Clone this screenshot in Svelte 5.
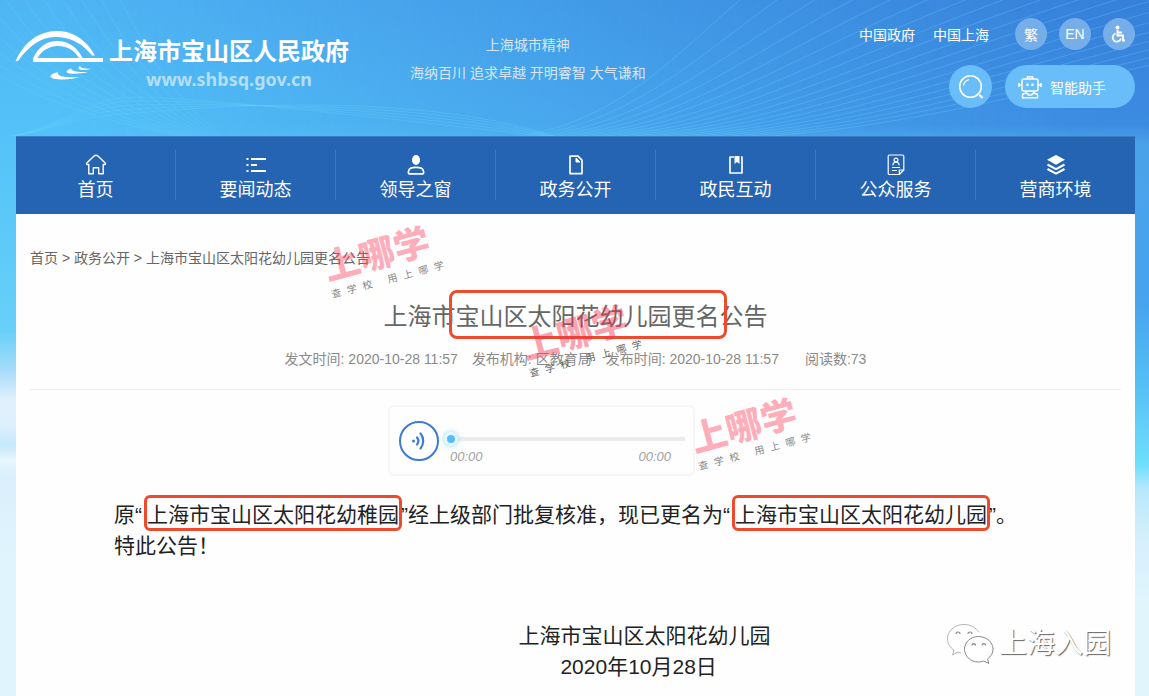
<script>
  const nav = [
    { label: '首页', icon: 'home' },
    { label: '要闻动态', icon: 'list' },
    { label: '领导之窗', icon: 'person' },
    { label: '政务公开', icon: 'file' },
    { label: '政民互动', icon: 'book' },
    { label: '公众服务', icon: 'card' },
    { label: '营商环境', icon: 'layers' }
  ];

  // Three families of fine curves behind the header
  const rightLines = Array.from({ length: 19 }, (_, i) =>
    `M${500 + i * 7} 138 C${610 + i * 14} ${130 + i} ${670 + i * 19} ${60 + i * 2} ${742 + i * 38} -2`
  );
  const leftLines = Array.from({ length: 12 }, (_, i) =>
    `M${-90 + i * 19} -2 C${-40 + i * 17} ${70 - i * 2} ${60 + i * 9} ${115 - i * 3} ${190 + i * 3} 138`
  );
  const lowLines = Array.from({ length: 5 }, (_, i) =>
    `M0 138 C50 132 80 ${116 - i * 3} 120 ${114 - i * 4} S400 ${84 + i * 9} 560 138`
  );

  const tagline = ['查', '学', '校', '', '用', '上', '哪', '学'];
  const stamps = ['one', 'two', 'three'];
  let position = $state(0);
</script>

<div class="page">
  <header>
    <svg class="waves" viewBox="0 0 1149 136" preserveAspectRatio="none" aria-hidden="true">
      {#each [...rightLines, ...leftLines, ...lowLines] as d}
        <path {d} />
      {/each}
    </svg>

    <a class="brand" href="#home">
      <svg class="emblem" viewBox="15 30 90 52" aria-hidden="true">
        <path d="M15.500 61.500C24 42 39 31 57 31c17 0 30 10 38 24.500h-3C83 44 71 37 55 37c-15 0-27 10-36.500 23.500z" />
        <path fill-rule="evenodd" d="M33 62v-3.500C38 47 47 41 57 41c12 0 21 7 25.500 17H103v4zM37.500 58H79c-5-8-12-12-21-12-8 0-16 4-20.500 12z" />
        <path d="M56 72.500c-8 2.500-7.500 6.500 4 7 8 .3 14-.8 20-2.500-9 .4-23 1-22-4.500zM71 68.500c-6 2-6 5 1 5.200 6 .2 11-.5 16-1.700-8 0-16 .2-17-3.500zM80 66c-3 1.500-1.500 4 3 4 3 0 6-.5 8-1.300-5 0-10 0-11-2.700z" />
      </svg>
      <span class="names">
        <strong>上海市宝山区人民政府</strong>
        <span class="url">www.shbsq.gov.cn</span>
      </span>
    </a>

    <p class="slogan">上海城市精神<br />海纳百川 追求卓越 开明睿智 大气谦和</p>

    <div class="tools">
      <div class="row">
        <a href="#china">中国政府</a>
        <a href="#shanghai">中国上海</a>
        <div class="rounds">
          <button class="round">繁</button>
          <button class="round">EN</button>
          <button class="round" aria-label="无障碍">
            <svg width="18" height="18" viewBox="0 0 18 18" aria-hidden="true">
              <circle cx="7.500" cy="2.500" r="2" fill="#fff" />
              <path d="M7.500 5v5.500h5.500v5h2M7.500 7.500h4.500" fill="none" stroke="#fff" stroke-width="2" />
              <path d="M5.500 8.500a4.200 4.200 0 1 0 5.500 5" fill="none" stroke="#fff" stroke-width="1.800" />
            </svg>
          </button>
        </div>
      </div>
      <div class="row big">
        <button class="search" aria-label="搜索">
          <svg width="26" height="26" viewBox="0 0 26 26" fill="none" stroke="#fff" aria-hidden="true">
            <circle cx="12.500" cy="12.500" r="10.800" stroke-width="1.500" />
            <path d="M5.500 11.500c.5-3 2.500-5 5.500-6" stroke-width="1.200" />
            <path d="M22 21.500l1.800 1.800" stroke-width="2.400" stroke-linecap="round" />
          </svg>
        </button>
        <button class="helper">
          <svg width="24" height="24" viewBox="0 0 24 24" fill="none" stroke="#fff" stroke-width="1.500" aria-hidden="true">
            <rect x="4" y="4" width="16" height="12" rx="2" />
            <path d="M9.500 4V1.800h5V4M1 8v4M23 8v4M1 10h3M20 10h3M8 16v2.500M16 16v2.500" />
            <path d="M9.500 8.500v2.500M14.500 8.500v2.500" stroke-width="2.200" />
            <path d="M4.500 22.800v-2.500c0-1.200.8-1.800 2-1.800h3l1 1.500h3l1-1.500h3c1.200 0 2 .6 2 1.800v2.500z" />
          </svg>
          智能助手
        </button>
      </div>
    </div>
  </header>

  <div class="sheet">
    <nav>
      {#each nav as item}
        <a href="#{item.icon}">
          <svg width="22" height="22" viewBox="0 0 22 22" fill="none" stroke="#fff" stroke-width="1.500" stroke-linejoin="round" aria-hidden="true">
            {#if item.icon === 'home'}
              <path d="M3.800 10.500v9.200h4.500v-6h5.400v6h4.500v-9.200h1.500c.8 0 1-.8.5-1.400l-7-6.800c-1.300-1.200-3.100-1.200-4.400 0l-7 6.800c-.5.600-.3 1.400.5 1.400z" stroke-width="1.400" />
            {:else if item.icon === 'list'}
              <path d="M6 5h15M6 11h6M6 17h15M1.500 5h2M1.500 11h2M1.500 17h2" stroke-width="2" />
            {:else if item.icon === 'person'}
              <ellipse cx="11" cy="6" rx="4" ry="5" fill="#fff" stroke="none" />
              <path d="M4 19.800c-1 0-.9-4.300 1.500-5.500 2.300-1.200 8.700-1.200 11 0 2.400 1.200 2.500 5.500 1.500 5.500z" stroke-width="1.700" />
            {:else if item.icon === 'file'}
              <path d="M5 2.200h8l4 4v13.400H5z" stroke-width="1.700" />
              <path d="M11 4v4h4z" fill="#fff" stroke-width="1" />
            {:else if item.icon === 'book'}
              <path d="M9 3H5v16h12V3h-1" stroke-width="1.700" />
              <path d="M9.500 2h5v8L12 8l-2.500 2z" fill="#fff" stroke="none" />
            {:else if item.icon === 'card'}
              <path d="M4.500 1h13c.8 0 1.300.5 1.300 1.300V16l-4.500 4.500H4.500c-.8 0-1.300-.5-1.300-1.300V2.300C3.200 1.500 3.700 1 4.500 1zM14.300 20.500V16h4.500" stroke-width="1.200" />
              <circle cx="11" cy="6" r="1.900" stroke-width="1.200" />
              <path d="M7.800 11.200c.2-2 1.300-3.200 3.200-3.200s3 1.200 3.200 3.200M7 13.500h8M7 16.500h5" stroke-width="1.200" />
            {:else}
              <path d="M11 1l9 4.800-9 4.900-9-4.900z" fill="#fff" stroke="none" />
              <path d="M2.500 10.500l8.500 4.600 8.500-4.600M2.500 15l8.500 4.600 8.500-4.600" stroke-width="2" />
            {/if}
          </svg>
          {item.label}
        </a>
      {/each}
    </nav>

    <main>
      <div class="crumbs">
        <a href="#home">首页</a> &gt; <a href="#file">政务公开</a> &gt; 上海市宝山区太阳花幼儿园更名公告
      </div>

      <h1>上海市<span class="mark title-mark">宝山区太阳花幼儿园更名</span>公告</h1>

      <div class="meta">
        <span>发文时间: 2020-10-28 11:57</span>
        <span>发布机构: 区教育局</span>
        <span>发布时间: 2020-10-28 11:57</span>
        <span class="reads">阅读数:73</span>
      </div>

      <div class="player-row">
        <div class="player">
          <button class="sound" aria-label="播放">
            <svg width="18" height="20" viewBox="0 0 18 20" fill="none" stroke="#3b7cd4" stroke-width="2.200" stroke-linecap="round" aria-hidden="true">
              <circle cx="3.500" cy="10" r="1.500" fill="#3b7cd4" stroke="none" />
              <path d="M7 6.500c1.600 2 1.600 5 0 7M10.500 2.500c3.600 4.200 3.600 10.800 0 15" />
            </svg>
          </button>
          <div class="timeline">
            <input type="range" min="0" max="100" bind:value={position} aria-label="播放进度" />
            <div class="times"><span>00:00</span><span>00:00</span></div>
          </div>
        </div>
      </div>

      <div class="body">
        <p>原“<span class="mark">上海市宝山区太阳花幼稚园</span>”经上级部门批复核准，现已更名为“<span class="mark">上海市宝山区太阳花幼儿园</span>”。</p>
        <p>特此公告！</p>
        <div class="sign">
          <p>上海市宝山区太阳花幼儿园</p>
          <p>2020年10月28日&nbsp;&nbsp;</p>
        </div>
      </div>

      {#each stamps as stamp}
        <div class="stamp {stamp}" aria-hidden="true">
          <b>上哪学</b>
          <span class="tag">{#each tagline as ch}<i>{ch}</i>{/each}</span>
        </div>
      {/each}

      <div class="account">
        <svg width="48" height="42" viewBox="0 0 48 42" aria-hidden="true">
          <g fill="#fff" stroke="#b4b4b4" stroke-width="1">
            <path d="M18 1.500C8.500 1.500 1.500 8 1.500 15.800c0 4.600 2.400 8.600 6.500 11.200l-1.500 5 5.500-3c2 .7 4 1 6 1 9 0 16.500-6.300 16.500-14.200S27.500 1.500 18 1.500z" stroke-dasharray="52 34 60" />
            <path d="M32.500 13.500c-8 0-14 5.700-14 12.700s6 12.800 14 12.800c2 0 3.700-.3 5.300-1l5 2.500-1.300-4.500c3.400-2.300 5.500-5.700 5.500-9.800 0-7-6.500-12.700-14.500-12.700z" stroke="#888" />
          </g>
          <g fill="none" stroke="#888" stroke-width="1.200">
            <path d="M10 11a2 2 0 1 1 4 0M22 11a2 2 0 1 1 4 0M26 22.500a1.800 1.800 0 1 1 3.600 0M36 22.500a1.800 1.800 0 1 1 3.600 0" />
          </g>
        </svg>
        <span>上海入园</span>
      </div>
    </main>
  </div>
</div>

<style>
  :global(body) {
    margin: 0;
    font-family: "Liberation Sans", "Noto Sans CJK SC", sans-serif;
  }

  .page {
    position: relative;
    isolation: isolate;
    display: flex;
    flex-direction: column;
    min-height: 100vh;
    background: linear-gradient(#4fb5f4 0, #54c2f8 130px, #66d0f8 330px, #a6dcf9 370px, #e0f0fc 400px, #dff0fc 424px, #c5e8fb 445px, #e8f6fd 460px, #d9effb 475px, #dff4fd 560px);
  }

  .page::before {
    content: "";
    position: absolute;
    inset: 0;
    z-index: -1;
    background: linear-gradient(#3680da 0, #3c8ce2 125px, #4ba2e9 145px, #46a3ee 300px, #55bdf5 380px, #6edffb 465px, #b8e8fb 490px, #d6effc 540px, #e0f5fc 600px);
    mask-image: linear-gradient(to right, transparent 5%, #000 96%);
  }

  a {
    color: inherit;
    text-decoration: none;
  }

  button {
    padding: 0;
    border: 0;
    color: #fff;
    font: inherit;
    cursor: pointer;
  }

  p {
    margin: 0;
  }

  svg {
    display: block;
    flex: none;
  }

  header {
    position: relative;
    display: flex;
    align-items: flex-start;
    box-sizing: border-box;
    min-height: 136px;
    padding: 18px 14px 28px 15px;
    color: #fff;
    font-size: 14px;
  }

  .waves {
    position: absolute;
    inset: 0;
    z-index: -1;
    width: 100%;
    height: 100%;
    fill: none;
    stroke: #67d3fb;
    stroke-opacity: 0.28;
    stroke-width: 1;
  }

  .brand {
    display: flex;
    gap: 4px;
    padding-top: 12px;
  }

  .emblem {
    width: 90px;
    height: 52px;
    fill: #fff;
  }

  .names {
    display: flex;
    flex-direction: column;
    align-items: center;
    padding-top: 5px;
  }

  .names strong {
    font-size: 24px;
    line-height: 34px;
  }

  .url {
    font-family: "Noto Sans", sans-serif;
    font-size: 18px;
    font-weight: 700;
    line-height: 20px;
    color: #b4dffa;
  }

  .slogan {
    margin: 13px 0 0 61px;
    line-height: 28px;
    text-align: center;
    color: #d7e6f2;
  }

  .tools {
    display: flex;
    flex-direction: column;
    align-items: flex-end;
    gap: 15px;
    margin-left: auto;
  }

  .row {
    display: flex;
    align-items: center;
    gap: 18px;
  }

  .row.big {
    gap: 13px;
  }

  .rounds {
    display: flex;
    gap: 12px;
    margin-left: 8px;
  }

  .round {
    display: grid;
    place-items: center;
    width: 32px;
    height: 32px;
    border-radius: 50%;
    background: #76aee9;
  }

  .search,
  .helper {
    display: flex;
    align-items: center;
    justify-content: center;
    height: 43px;
    border-radius: 22px;
    background: #69bdf8;
  }

  .search {
    width: 43px;
  }

  .helper {
    gap: 8px;
    width: 130px;
    padding-right: 16px;
  }

  .sheet {
    display: flex;
    flex: 1;
    flex-direction: column;
    margin: 0 14px 0 16px;
    background: #fefefe;
  }

  nav {
    display: flex;
    box-sizing: border-box;
    height: 78px;
    padding: 14px 0;
    background: #2563b3;
    box-shadow: inset 0 1px #3b7cc6;
  }

  nav a {
    display: flex;
    flex: 1;
    flex-direction: column;
    align-items: center;
    gap: 1px;
    padding-top: 4px;
    border-right: 1px solid #3d76bf;
    color: #fff;
    font-size: 18px;
    line-height: 26px;
  }

  nav a:last-child {
    border-right: 0;
  }

  main {
    position: relative;
    flex: 1;
    padding: 34px 14px 14px;
  }

  .crumbs {
    font-size: 14px;
    line-height: 20px;
    color: #666;
  }

  h1 {
    margin: 29px 0 0;
    font-family: "Noto Sans CJK SC", sans-serif;
    font-size: 24px;
    font-weight: 400;
    line-height: 36px;
    text-align: center;
    color: #666;
  }

  .mark {
    margin: 0 2px 0 5px;
    font-family: "Noto Sans CJK SC", sans-serif;
    border-radius: 3px;
    outline: 3px solid #ee4a2e;
  }

  .title-mark {
    margin: 0;
    outline-offset: 4px;
    border-radius: 1px;
  }

  .meta {
    display: flex;
    justify-content: center;
    gap: 14px;
    padding: 16px 0 20px;
    border-bottom: 1px solid #eee;
    font-size: 14px;
    line-height: 20px;
    color: #8a8a8a;
  }

  .reads {
    margin-left: 12px;
  }

  .player-row {
    display: flex;
    justify-content: center;
    padding: 15px 68px 0 0;
  }

  .player {
    display: flex;
    align-items: flex-start;
    gap: 5px;
    box-sizing: border-box;
    width: 307px;
    height: 71px;
    padding: 14px 8px 0 9px;
    border: 2px solid #f6f6f6;
    border-radius: 6px;
  }

  .sound {
    display: grid;
    place-items: center;
    flex: none;
    width: 40px;
    height: 40px;
    border: 2px solid #3b7cd4;
    border-radius: 50%;
    background: #fff;
  }

  .timeline {
    flex: 1;
    padding-top: 11px;
  }

  input {
    display: block;
    width: 100%;
    height: 14px;
    margin: 0;
    appearance: none;
    background: linear-gradient(#ececec, #ececec) center / 100% 4px no-repeat;
  }

  input::-webkit-slider-thumb {
    appearance: none;
    width: 14px;
    height: 14px;
    border: 3px solid #e8f7ff;
    border-radius: 50%;
    background: #53bff9;
    box-shadow: 0 0 5px #8fd6fb;
  }

  .times {
    display: flex;
    justify-content: space-between;
    padding: 3px 14px 0 6px;
    font-size: 13px;
    font-style: italic;
    line-height: 16px;
    color: #a2a2a2;
  }

  .body {
    padding: 22px 84px 0;
    font-size: 21px;
    line-height: 31px;
    color: #222;
  }

  .sign {
    padding: 59px 0 0 138px;
    text-align: center;
  }

  .stamp {
    position: absolute;
    display: flex;
    flex-direction: column;
    align-items: center;
    width: 120px;
    color: rgb(255 70 100 / 0.44);
    transform: rotate(-15deg);
    pointer-events: none;
  }

  .stamp b {
    font-family: "Noto Sans CJK SC", sans-serif;
    font-size: 36px;
    font-weight: 900;
    line-height: 46px;
  }

  .tag {
    display: flex;
    gap: 6px;
    padding-left: 8px;
    color: #888;
    font-size: 10px;
    line-height: 16px;
  }

  .tag i {
    min-width: 4px;
    font-style: normal;
  }

  .one {
    left: 302px;
    top: 14px;
  }

  .two {
    left: 500px;
    top: 93px;
    color: rgb(245 50 80 / 0.46);
  }

  .two .tag {
    color: #666;
  }

  .three {
    left: 669px;
    top: 186px;
  }

  .account {
    position: absolute;
    right: 24px;
    bottom: 31px;
    display: flex;
    align-items: center;
    gap: 5px;
    color: #fff;
    font-size: 28px;
    line-height: 42px;
    text-shadow: 1px 1px 1px #666;
  }
</style>
